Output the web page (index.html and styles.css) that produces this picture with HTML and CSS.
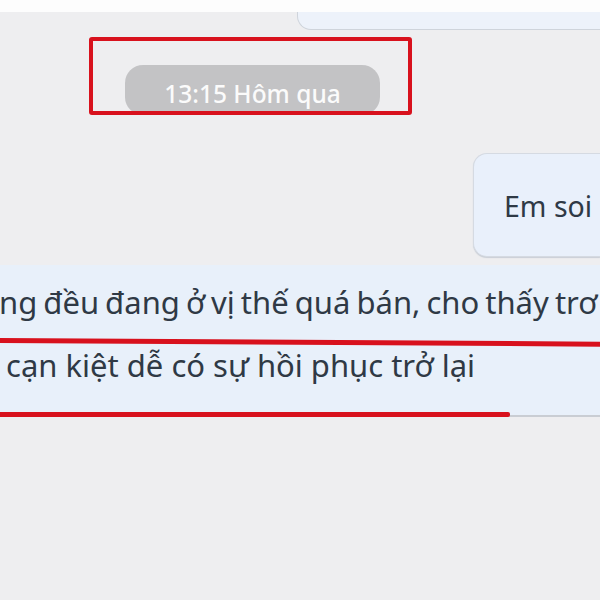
FILE: index.html
```html
<!DOCTYPE html>
<html lang="vi">
<head>
<meta charset="utf-8">
<link rel="stylesheet" href="styles.css">
</head>
<body>
<div class="topbar"></div>
<main class="chat">
  <div class="row row-right">
    <div class="bubble-top"></div>
  </div>
  <div class="row row-time">
    <div class="time-pill">13:15 Hôm qua</div>
  </div>
  <div class="row row-right">
    <div class="bubble-me">Em soi</div>
  </div>
  <div class="bubble-them">
    <p class="line line-1">ng đều đang ở vị thế quá bán, cho thấy trơ</p>
    <p class="line line-2">cạn kiệt dễ có sự hồi phục trở lại</p>
  </div>
  <div class="mark mark-box"></div>
  <div class="mark mark-line1"></div>
  <div class="mark mark-line2"></div>
</main>
</body>
</html>
```
FILE: styles.css
```css
html, body {
  margin: 0;
  padding: 0;
}
body {
  width: 600px;
  height: 600px;
  overflow: hidden;
  background: #eeeef0;
  font-family: "Noto Sans", "Open Sans", sans-serif;
}
.topbar {
  height: 12px;
  background: #fdfdfd;
}
.chat {
  position: relative;
  display: flex;
  flex-direction: column;
}
.row {
  display: flex;
}
.row-right {
  justify-content: flex-end;
}
.bubble-top {
  width: 302px;
  height: 17px;
  background: #edf2fa;
  border: 1px solid #cfd4db;
  border-top: none;
  border-right: none;
  border-bottom-left-radius: 14px;
}
.row-time {
  padding-left: 125px;
  margin-top: 35px;
}
.time-pill {
  width: 255px;
  height: 50px;
  box-sizing: border-box;
  padding-top: 14px;
  border-radius: 18px;
  background: #c3c3c5;
  color: #fbfbfb;
  font-size: 24.5px;
  font-weight: 500;
  text-align: center;
  line-height: 30px;
}
.bubble-me {
  margin-top: 38px;
  width: 127px;
  height: 104px;
  box-sizing: border-box;
  padding: 34px 0 0 30px;
  background: #e9f0fb;
  border: 1px solid #d5dae2;
  border-right: none;
  border-radius: 14px 0 0 14px;
  box-shadow: 0 1px 1px #c9ced6;
  color: #2f3945;
  font-size: 28.5px;
  line-height: 36px;
  white-space: nowrap;
  overflow: hidden;
}
.bubble-them {
  margin-top: 8px;
  height: 152px;
  box-sizing: border-box;
  padding-top: 17px;
  background: #e8f0fa;
  border-bottom: 2px solid #c9cdd3;
  color: #2f3945;
  font-size: 31px;
  line-height: 40px;
  overflow: hidden;
}
.line {
  margin: 0;
  white-space: nowrap;
}
.line-1 {
  margin-left: -1px;
  word-spacing: -2px;
}
.line-2 {
  margin-top: 23px;
  margin-left: 6px;
}
.mark {
  position: absolute;
  background: #d8111d;
}
.mark-box {
  left: 89px;
  top: 25px;
  width: 315px;
  height: 70px;
  background: transparent;
  border: 4px solid #d8111d;
  border-radius: 3px;
}
.mark-line1 {
  left: 0;
  top: 326px;
  width: 600px;
  height: 5px;
  transform: rotate(0.35deg);
  transform-origin: left center;
}
.mark-line2 {
  left: 0;
  top: 400px;
  width: 510px;
  height: 5px;
  border-radius: 0 2px 2px 0;
}
```
